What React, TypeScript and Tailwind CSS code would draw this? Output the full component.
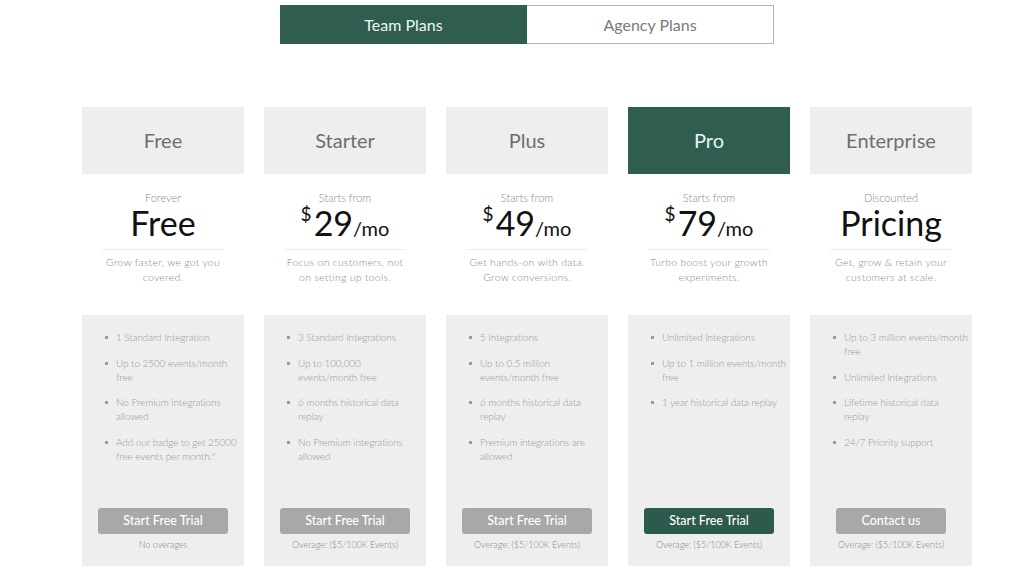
import React from "react";

type Plan = {
  name: string;
  label: string;
  price: string | null;
  big?: string;
  desc: string[];
  features: string[][];
  cta: string;
  note: string;
  active?: boolean;
};

const plans: Plan[] = [
  {
    name: "Free",
    label: "Forever",
    price: null,
    big: "Free",
    desc: ["Grow faster, we got you", "covered."],
    features: [
      ["1 Standard Integration"],
      ["Up to 2500 events/month", "free"],
      ["No Premium integrations", "allowed"],
      ["Add our badge to get 25000", "free events per month.*"],
    ],
    cta: "Start Free Trial",
    note: "No overages",
  },
  {
    name: "Starter",
    label: "Starts from",
    price: "29",
    desc: ["Focus on customers, not", "on setting up tools."],
    features: [
      ["3 Standard Integrations"],
      ["Up to 100,000", "events/month free"],
      ["6 months historical data", "replay"],
      ["No Premium integrations", "allowed"],
    ],
    cta: "Start Free Trial",
    note: "Overage: ($5/100K Events)",
  },
  {
    name: "Plus",
    label: "Starts from",
    price: "49",
    desc: ["Get hands-on with data.", "Grow conversions."],
    features: [
      ["5 Integrations"],
      ["Up to 0.5 million", "events/month free"],
      ["6 months historical data", "replay"],
      ["Premium integrations are", "allowed"],
    ],
    cta: "Start Free Trial",
    note: "Overage: ($5/100K Events)",
  },
  {
    name: "Pro",
    label: "Starts from",
    price: "79",
    desc: ["Turbo boost your growth", "experiments."],
    features: [
      ["Unlimited Integrations"],
      ["Up to 1 million events/month", "free"],
      ["1 year historical data replay"],
    ],
    cta: "Start Free Trial",
    note: "Overage: ($5/100K Events)",
    active: true,
  },
  {
    name: "Enterprise",
    label: "Discounted",
    price: null,
    big: "Pricing",
    desc: ["Get, grow & retain your", "customers at scale."],
    features: [
      ["Up to 3 million events/month", "free"],
      ["Unlimited Integrations"],
      ["Lifetime historical data", "replay"],
      ["24/7 Priority support"],
    ],
    cta: "Contact us",
    note: "Overage: ($5/100K Events)",
  },
];

function Column({ p }: { p: Plan }) {
  return (
    <div className="flex flex-col">
      <div
        className={
          p.active
            ? "h-[67px] flex items-center justify-center bg-[#2f5e50] text-[#e8f3ee] text-[20px] pb-[1px]"
            : "h-[67px] flex items-center justify-center bg-[#eeeeee] text-[#6e6e6e] text-[20px] pb-[1px]"
        }
      >
        {p.name}
      </div>
      <div className="h-[141px] flex flex-col items-center pt-[17px]">
        <div className="text-[11px] leading-[14px] font-light text-[#8a8a8a]">{p.label}</div>
        <div className="h-[40px] -mt-[2px] flex items-center justify-center text-[#111]">
          {p.price ? (
            <div className="flex items-start">
              <span className="text-[19px] leading-[22px] mr-[2px]">$</span>
              <span className="text-[34px] leading-[40px]">{p.price}</span>
              <span className="text-[20px] leading-[24px] self-end mb-[3px]">/mo</span>
            </div>
          ) : (
            <span className="text-[34px] leading-[40px]">{p.big}</span>
          )}
        </div>
        <div className="mt-[6px] h-px w-[122px] bg-[#ececec]" />
        <div className="mt-[5px] text-center text-[10.5px] leading-[15px] font-light text-[#8c8c8c] tracking-[0.25px]">
          {p.desc.map((d) => (
            <div key={d}>{d}</div>
          ))}
        </div>
      </div>
      <div className="h-[251px] bg-[#eeeeee] flex flex-col pt-[15px] pb-[15px]">
        <ul className="flex flex-col gap-[11.5px] pl-[23px] pr-0">
          {p.features.map((f) => (
            <li key={f.join(" ")} className="flex items-start">
              <span className="mt-[6px] w-[3px] h-[3px] shrink-0 bg-[#9a9a9a]" />
              <span className="ml-[8px] text-[10px] leading-[14px] font-light text-[#999999] whitespace-nowrap tracking-[-0.1px]">
                {f.map((line) => (
                  <span key={line} className="block">
                    {line}
                  </span>
                ))}
              </span>
            </li>
          ))}
        </ul>
        <div className="mt-auto flex flex-col items-center">
          <div
            className={
              p.active
                ? "h-[26px] px-[25px] rounded-[3px] bg-[#2c5a4c] text-white text-[12.5px] font-medium flex items-center"
                : "h-[26px] px-[25px] rounded-[3px] bg-[#a8a8a8] text-white text-[12.5px] font-medium flex items-center"
            }
          >
            {p.cta}
          </div>
          <div className="mt-[5px] text-[9px] leading-[12px] font-light text-[#8a8a8a]">{p.note}</div>
        </div>
      </div>
    </div>
  );
}

export default function App() {
  return (
    <div
      className="w-[1024px] h-[574px] bg-white overflow-hidden"
      style={{ fontFamily: "Lato, 'Open Sans', sans-serif" }}
    >
      <div className="ml-[82px] w-[890px] pt-[5px]">
        <div className="mx-auto w-[494px] h-[39px] flex">
          <div className="w-[247px] bg-[#2f5e50] text-[#f1f5f3] text-[16px] flex items-center justify-center">
            Team Plans
          </div>
          <div className="flex-1 border border-[#b5b5b5] border-l-0 text-[#7a7a7a] text-[16px] flex items-center justify-center">
            Agency Plans
          </div>
        </div>
        <div className="mt-[63px] grid grid-cols-5 gap-[20px]">
          {plans.map((p) => (
            <Column key={p.name} p={p} />
          ))}
        </div>
      </div>
    </div>
  );
}
